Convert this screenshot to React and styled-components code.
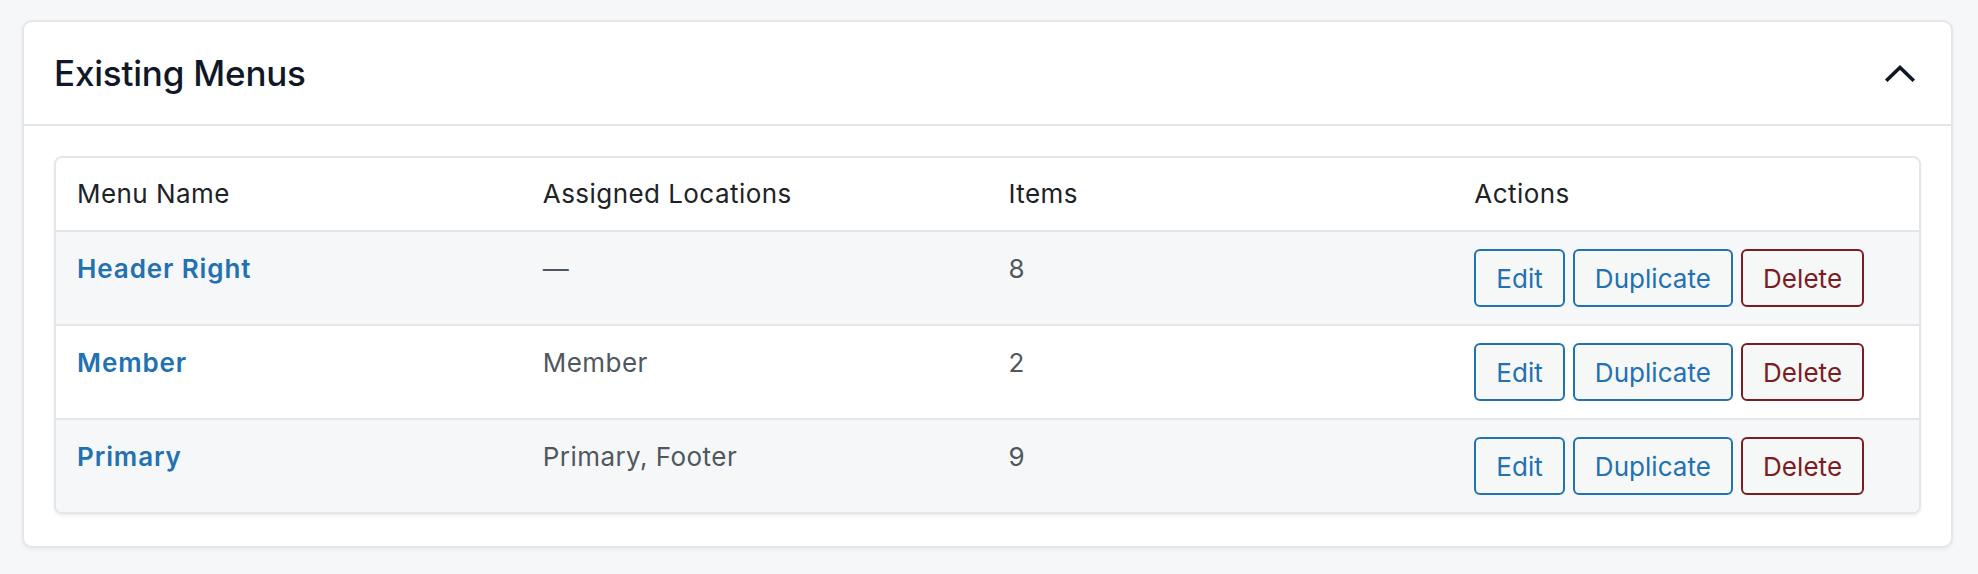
import React from "react";
import styled, { createGlobalStyle } from "styled-components";

const GlobalStyle = createGlobalStyle`
  body {
    margin: 0;
    padding: 0;
    background: #f6f7f9;
    font-family: Inter, "Noto Sans", "Liberation Sans", sans-serif;
  }
`;

const Page = styled.div`
  padding: 20px 25px 27px 22px;
`;

const Card = styled.section`
  background: #fff;
  border: 2px solid #e4e6ea;
  border-radius: 10px;
  box-shadow: 0 2px 4px rgba(16, 24, 40, 0.05);
`;

const CardHeader = styled.header`
  height: 102px;
  display: flex;
  align-items: center;
  justify-content: space-between;
  padding: 0 31px 0 30px;
  border-bottom: 2px solid #e4e6ea;
`;

const Title = styled.h2`
  margin: 0;
  font-size: 35px;
  font-weight: 500;
  color: #101828;
  letter-spacing: -0.2px;
`;

const ToggleButton = styled.button`
  width: 40px;
  height: 40px;
  display: flex;
  align-items: center;
  justify-content: center;
  padding: 0;
  border: 0;
  background: none;
  color: #101828;
  cursor: pointer;
`;

const CardBody = styled.div`
  padding: 30px 30px 32px;
`;

const TableWrap = styled.div`
  border: 2px solid #e4e6ea;
  border-radius: 8px;
  overflow: hidden;
  box-shadow: 0 2px 3px rgba(16, 24, 40, 0.07);
`;

const Table = styled.table`
  width: 100%;
  border-collapse: separate;
  border-spacing: 0;
  table-layout: fixed;
  font-size: 26px;
  letter-spacing: 0.45px;

  tbody tr + tr td {
    border-top: 2px solid #e4e6ea;
  }
`;

const Th = styled.th`
  text-align: left;
  font-weight: 400;
  color: #1d2327;
  line-height: 40px;
  padding: 16px 21px;
  border-bottom: 2px solid #e4e6ea;
`;

const Row = styled.tr`
  background: ${({ $striped }) => ($striped ? "#f6f7f9" : "#fff")};
`;

const Td = styled.td`
  vertical-align: top;
  line-height: 40px;
  padding: 17px 21px;
  color: #50575e;
`;

const NameLink = styled.a`
  color: #2271b1;
  font-weight: 600;
  letter-spacing: 0.9px;
  text-decoration: none;
`;

const Actions = styled.div`
  display: flex;
  gap: 8px;
`;

const ActionButton = styled.button`
  height: 58px;
  padding: 0 20px;
  font-family: inherit;
  font-size: 26px;
  letter-spacing: 0.05px;
  background: #f6f7f7;
  border: 2px solid ${({ $danger }) => ($danger ? "#7c1d24" : "#2271b1")};
  color: ${({ $danger }) => ($danger ? "#7c1d24" : "#2271b1")};
  border-radius: 6px;
  cursor: pointer;
`;

const menus = [
  { name: "Header Right", locations: "—", items: 8 },
  { name: "Member", locations: "Member", items: 2 },
  { name: "Primary", locations: "Primary, Footer", items: 9 },
];

export default function App() {
  return (
    <>
      <GlobalStyle />
      <Page>
        <Card>
          <CardHeader>
            <Title>Existing Menus</Title>
            <ToggleButton aria-label="Collapse">
              <svg width="30" height="18" viewBox="0 0 30 18" fill="none">
                <polyline
                  points="2.5,15.5 15,3.5 27.5,15.5"
                  stroke="currentColor"
                  strokeWidth="3.6"
                  strokeLinecap="square"
                />
              </svg>
            </ToggleButton>
          </CardHeader>
          <CardBody>
            <TableWrap>
              <Table>
                <thead>
                  <tr>
                    <Th>Menu Name</Th>
                    <Th>Assigned Locations</Th>
                    <Th>Items</Th>
                    <Th>Actions</Th>
                  </tr>
                </thead>
                <tbody>
                  {menus.map((m, i) => (
                    <Row key={m.name} $striped={i % 2 === 0}>
                      <Td>
                        <NameLink href="#">{m.name}</NameLink>
                      </Td>
                      <Td>{m.locations}</Td>
                      <Td>{m.items}</Td>
                      <Td>
                        <Actions>
                          <ActionButton>Edit</ActionButton>
                          <ActionButton>Duplicate</ActionButton>
                          <ActionButton $danger>Delete</ActionButton>
                        </Actions>
                      </Td>
                    </Row>
                  ))}
                </tbody>
              </Table>
            </TableWrap>
          </CardBody>
        </Card>
      </Page>
    </>
  );
}
